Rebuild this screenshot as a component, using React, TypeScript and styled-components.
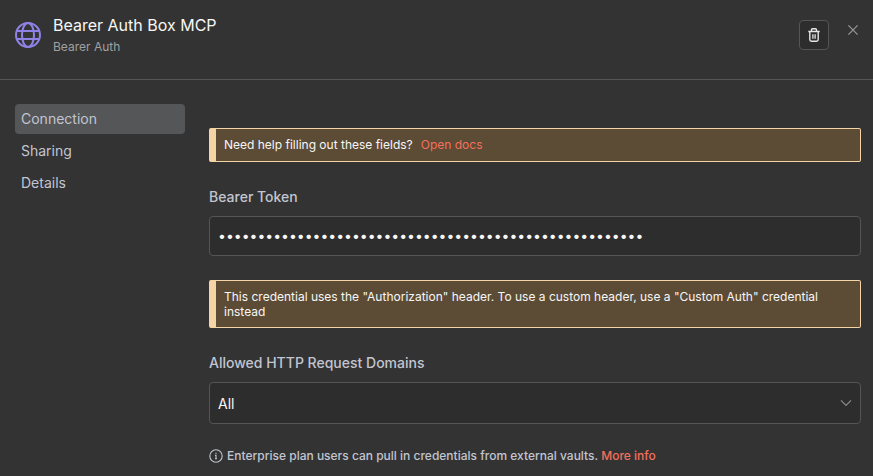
import React from "react";
import styled, { createGlobalStyle } from "styled-components";

const GlobalStyle = createGlobalStyle`
  *, *::before, *::after { box-sizing: border-box; }
  html { background: #333333; }
  body {
    margin: 0;
    background: #333333;
    color: #c2c5d0;
    font-family: Inter, "Liberation Sans", sans-serif;
    font-size: 14px;
  }
  button, input, select { font: inherit; }
`;

const Dialog = styled.main`
  display: flex;
  flex-direction: column;
`;

const Header = styled.header`
  display: flex;
  align-items: flex-start;
  min-height: 80px;
  padding: 15px 12px 0 15px;
  border-bottom: 1px solid #555555;
`;

const GlobeIcon = styled.svg`
  width: 26px;
  height: 26px;
  margin: 7px 12px 0 0;
  flex: none;
`;

const Heading = styled.div`
  flex: 1;
`;

const Title = styled.h1`
  margin: 0;
  font-size: 16px;
  font-weight: 400;
  line-height: 20px;
  color: #f7f7f7;
`;

const Subtitle = styled.p`
  margin: 4px 0 0;
  font-size: 12px;
  line-height: 16px;
  color: #a0a0a3;
`;

const Actions = styled.div`
  display: flex;
  align-items: flex-start;
  gap: 16px;
`;

const IconButton = styled.button<{ $framed?: boolean }>`
  display: flex;
  align-items: center;
  justify-content: center;
  width: ${(p) => (p.$framed ? 30 : 16)}px;
  height: 30px;
  margin-top: ${(p) => (p.$framed ? 5 : 0)}px;
  padding: 0;
  border: ${(p) => (p.$framed ? "1px solid #555555" : "0")};
  border-radius: 4px;
  background: ${(p) => (p.$framed ? "#2d2d2d" : "transparent")};
  color: ${(p) => (p.$framed ? "#e6e6e6" : "#999999")};
  cursor: pointer;
`;

const Body = styled.div`
  display: flex;
  align-items: flex-start;
  gap: 24px;
  padding: 24px 12px 12px 15px;
`;

const Sidebar = styled.nav`
  display: flex;
  flex-direction: column;
  flex: none;
  gap: 2px;
  width: 170px;
`;

const NavLink = styled.a<{ $active?: boolean }>`
  padding: 5px 6px;
  border-radius: 4px;
  line-height: 20px;
  color: #c2c5d0;
  text-decoration: none;
  background: ${(p) => (p.$active ? "#555658" : "transparent")};
`;

const Content = styled.form`
  display: flex;
  flex-direction: column;
  flex: 1;
  min-width: 0;
  gap: 24px;
  padding-top: 24px;
`;

const Notice = styled.div`
  display: flex;
  align-items: flex-start;
  gap: 8px;
  min-height: 34px;
  padding: 8px;
  border: 1px solid #f5d5a6;
  border-left-width: 7px;
  border-radius: 2px;
  background: #5c4b35;
  color: #f7f7f7;
  font-size: 12px;
  line-height: 15px;
`;

const NoticeText = styled.span`
  max-width: 600px;
`;

const AccentLink = styled.a`
  color: #f4705c;
  text-decoration: none;
`;

const Field = styled.div`
  display: flex;
  flex-direction: column;
  gap: 8px;
`;

const Label = styled.label`
  font-weight: 500;
  line-height: 22px;
`;

const TextInput = styled.input`
  width: 100%;
  height: 40px;
  padding: 0 8px 2px;
  border: 1px solid #555555;
  border-radius: 4px;
  background: #2d2d2d;
  color: #f7f7f7;
`;

const SelectFrame = styled.div`
  display: grid;
  align-items: center;

  & > * { grid-area: 1 / 1; }
`;

const Select = styled.select`
  width: 100%;
  height: 42px;
  padding: 0 32px 0 8px;
  border: 1px solid #555555;
  border-radius: 4px;
  background: #2d2d2d;
  color: #f7f7f7;
  appearance: none;
`;

const SelectArrow = styled.svg`
  justify-self: end;
  width: 12px;
  height: 8px;
  margin-right: 9px;
  pointer-events: none;
`;

const Footnote = styled.p`
  display: flex;
  align-items: center;
  gap: 4px;
  margin: 0;
  font-size: 12px;
  font-weight: 500;
  line-height: 16px;
`;

const navItems = ["Connection", "Sharing", "Details"];

export default function App() {
  return (
    <>
      <GlobalStyle />
      <Dialog>
        <Header>
          <GlobeIcon viewBox="0 0 26 26" fill="none" stroke="#8f82e6" strokeWidth="2" aria-hidden="true">
            <circle cx="13" cy="13" r="12" />
            <ellipse cx="13" cy="13" rx="6" ry="12" />
            <path d="M2 9h22M2 17h22" />
          </GlobeIcon>
          <Heading>
            <Title>Bearer Auth Box MCP</Title>
            <Subtitle>Bearer Auth</Subtitle>
          </Heading>
          <Actions>
            <IconButton $framed type="button" aria-label="Delete credential">
              <svg width="12" height="14" viewBox="0 0 12 14" fill="none" stroke="currentColor" strokeWidth="1.4" aria-hidden="true">
                <path d="M0.3 3.5h11.4M3.5 3.3V2q0-1.2 1.2-1.2h2.6q1.2 0 1.2 1.2v1.3M1.8 3.6v8q0 1.7 1.7 1.7h5q1.7 0 1.7-1.7v-8" />
                <path d="M4.9 6.2v4.6M7.1 6.2v4.6" strokeWidth="1.3" />
              </svg>
            </IconButton>
            <IconButton type="button" aria-label="Close">
              <svg width="10" height="10" viewBox="0 0 10 10" stroke="currentColor" strokeWidth="1.2" aria-hidden="true">
                <path d="M0.4 0.4l9.2 9.2M9.6 0.4l-9.2 9.2" />
              </svg>
            </IconButton>
          </Actions>
        </Header>
        <Body>
          <Sidebar aria-label="Credential sections">
            {navItems.map((item, i) => (
              <NavLink key={item} href={`#${item.toLowerCase()}`} $active={i === 0} aria-current={i === 0 ? "page" : undefined}>
                {item}
              </NavLink>
            ))}
          </Sidebar>
          <Content>
            <Notice>
              <span>Need help filling out these fields?</span>
              <AccentLink href="#docs">Open docs</AccentLink>
            </Notice>
            <Field>
              <Label htmlFor="token">Bearer Token</Label>
              <TextInput id="token" type="password" autoComplete="off" defaultValue={"x".repeat(54)} />
            </Field>
            <Notice>
              <NoticeText>
                This credential uses the "Authorization" header. To use a custom header, use a "Custom Auth" credential instead
              </NoticeText>
            </Notice>
            <Field>
              <Label htmlFor="domains">Allowed HTTP Request Domains</Label>
              <SelectFrame>
                <Select id="domains" defaultValue="all">
                  <option value="all">All</option>
                </Select>
                <SelectArrow viewBox="0 0 12 8" fill="none" stroke="#8c8c8c" strokeWidth="1.2" aria-hidden="true">
                  <path d="M1 1.3l5 5 5-5" />
                </SelectArrow>
              </SelectFrame>
            </Field>
            <Footnote>
              <svg width="14" height="14" viewBox="0 0 14 14" fill="none" stroke="currentColor" strokeWidth="1.1" aria-hidden="true">
                <circle cx="7" cy="7" r="6.2" />
                <path d="M6 6.4h1v3.2M6 9.7h2M6.5 4.4h1" />
              </svg>
              <span>
                Enterprise plan users can pull in credentials from external vaults. <AccentLink href="#vaults">More info</AccentLink>
              </span>
            </Footnote>
          </Content>
        </Body>
      </Dialog>
    </>
  );
}
